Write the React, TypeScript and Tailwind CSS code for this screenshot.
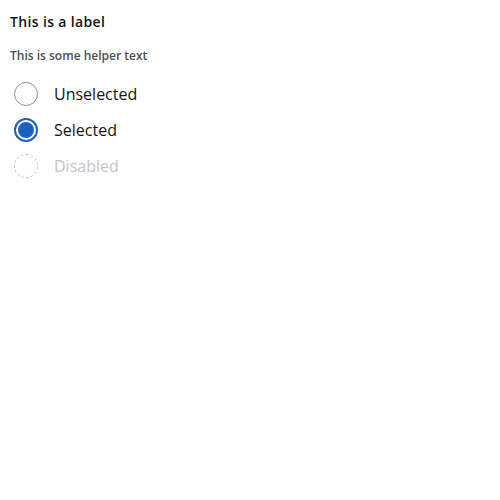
import { useState } from 'react';

const options = [
  { value: 'unselected', label: 'Unselected', disabled: false },
  { value: 'selected', label: 'Selected', disabled: false },
  { value: 'disabled', label: 'Disabled', disabled: true },
];

export default function App() {
  const [value, setValue] = useState('selected');

  return (
    <div className="min-h-screen bg-white p-[10px] font-['Open_Sans',sans-serif]">
      <fieldset>
        <legend className="text-[14px] font-semibold leading-[24px] tracking-[0.35px] text-[#151515]">
          This is a label
        </legend>
        <p className="mt-[13px] text-[12px] font-semibold leading-[18px] text-[#4d4f53]">
          This is some helper text
        </p>
        <div className="mt-[17px] flex flex-col gap-[12px]">
          {options.map((o) => {
            const checked = value === o.value;
            return (
              <label
                key={o.value}
                className={`flex items-center gap-[16px] pl-[4px] ${o.disabled ? 'cursor-not-allowed' : 'cursor-pointer'}`}
              >
                <input
                  type="radio"
                  name="demo"
                  className="sr-only"
                  checked={checked}
                  disabled={o.disabled}
                  onChange={() => setValue(o.value)}
                />
                <span
                  className={`flex h-[24px] w-[24px] items-center justify-center rounded-full ${
                    o.disabled
                      ? 'border border-dashed border-[#c8c9cc]'
                      : checked
                        ? 'border-2 border-[#1b5fc1]'
                        : 'border border-[#8d9094]'
                  }`}
                >
                  {checked && <span className="h-[16px] w-[16px] rounded-full bg-[#1b5fc1]" />}
                </span>
                <span
                  className={`text-[16px] leading-[24px] ${o.disabled ? 'text-[#c3c4c7]' : 'text-[#151515]'}`}
                >
                  {o.label}
                </span>
              </label>
            );
          })}
        </div>
      </fieldset>
    </div>
  );
}
